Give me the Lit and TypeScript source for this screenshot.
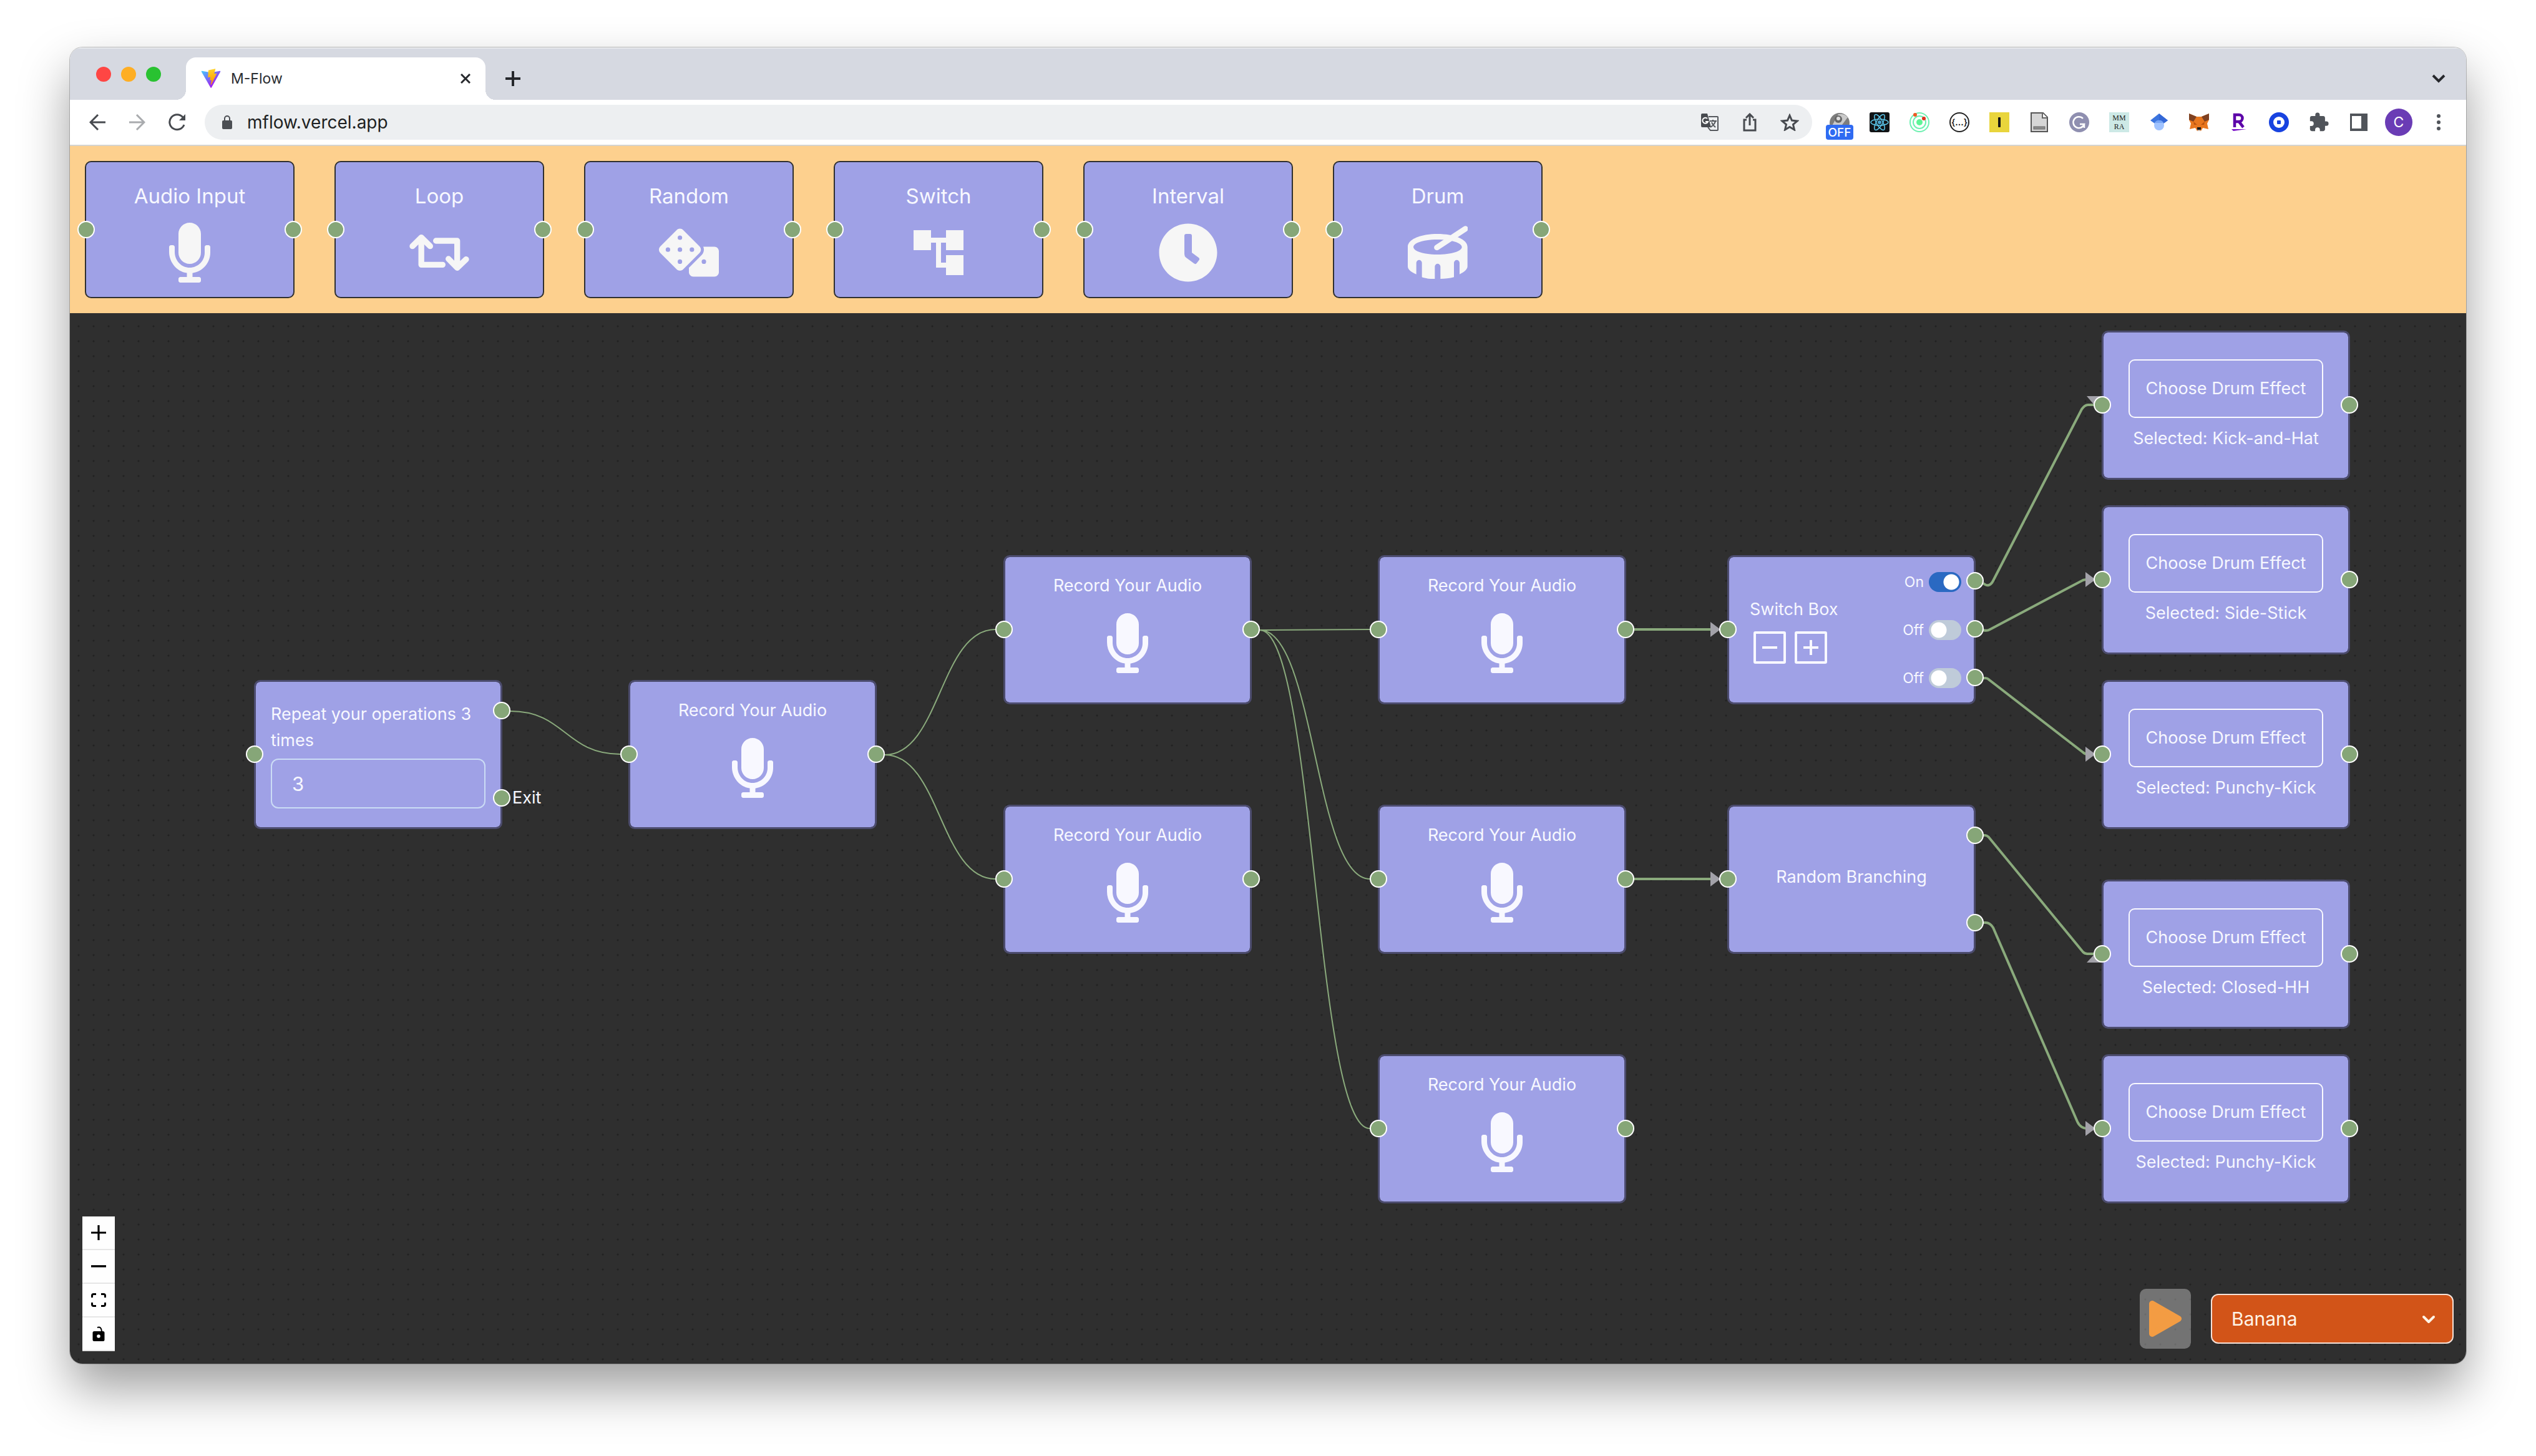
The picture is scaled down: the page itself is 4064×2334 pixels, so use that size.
import { LitElement, html, svg, css, type TemplateResult } from "lit";
import { customElement, state } from "lit/decorators.js";

/* ---------- shared glyphs ---------- */

const micIcon = html`<svg class="glyph" viewBox="-80 0 512 512" aria-hidden="true">
  <path d="M176 352c53.02 0 96-42.98 96-96V96c0-53.02-42.98-96-96-96S80 42.98 80 96v160c0 53.02 42.98 96 96 96zm160-160h-16c-8.84 0-16 7.16-16 16v48c0 74.8-64.49 134.82-140.79 127.38C96.71 376.89 48 317.11 48 250.3V208c0-8.84-7.16-16-16-16H16c-8.84 0-16 7.16-16 16v40.16c0 89.64 63.97 169.55 152 181.69V464H96c-8.84 0-16 7.16-16 16v16c0 8.84 7.16 16 16 16h160c8.84 0 16-7.16 16-16v-16c0-8.84-7.16-16-16-16h-56v-33.77C285.71 418.47 352 344.9 352 256v-48c0-8.84-7.16-16-16-16z"/>
</svg>`;

const loopIcon = html`<svg class="glyph line" viewBox="33 21 288 288" stroke-width="28" aria-hidden="true">
  <path d="M48 134L90.500 92L133 134M90.500 96V223H193M161 108H263V236M221 195L263 238L306 197"/>
</svg>`;

const diceIcon = html`<svg class="glyph" viewBox="0 0 640 512" aria-hidden="true">
  <path fill-rule="evenodd" d="M592 192H473.260c12.690 29.590 7.120 65.200-17 89.320L320 417.580V464c0 26.510 21.490 48 48 48h224c26.510 0 48-21.490 48-48V240c0-26.510-21.490-48-48-48zM480 376a24 24 0 1 1 0-48 24 24 0 0 1 0 48zM433.630 189.300L258.700 14.370c-19.160-19.160-50.230-19.160-69.390 0L14.370 189.300c-19.160 19.160-19.160 50.230 0 69.390L189.300 433.630c19.160 19.160 50.230 19.160 69.390 0L433.630 258.700c19.160-19.170 19.160-50.240 0-69.400zM96 248a24 24 0 1 1 0-48 24 24 0 0 1 0 48zM224 376a24 24 0 1 1 0-48 24 24 0 0 1 0 48zM224 248a24 24 0 1 1 0-48 24 24 0 0 1 0 48zM224 120a24 24 0 1 1 0-48 24 24 0 0 1 0 48zM352 248a24 24 0 1 1 0-48 24 24 0 0 1 0 48z"/>
</svg>`;

const treeIcon = html`<svg class="glyph" viewBox="0 0 24 24" aria-hidden="true">
  <path d="M22 11V3h-7v3H9V3H2v8h7V8h2v10h4v3h7v-8h-7v3h-2V8h2v3z"/>
</svg>`;

const clockIcon = html`<svg class="glyph" viewBox="0 0 512 512" aria-hidden="true">
  <path d="M256,8C119,8,8,119,8,256S119,504,256,504,504,393,504,256,393,8,256,8Zm92.49,313h0l-20,25a16,16,0,0,1-22.49,2.5h0l-67-49.72a40,40,0,0,1-15-31.23V112a16,16,0,0,1,16-16h32a16,16,0,0,1,16,16V256l58,42.5A16,16,0,0,1,348.49,321Z"/>
</svg>`;

const drumIcon = html`<svg class="glyph" viewBox="48 21 288 288" aria-hidden="true">
  <path fill-rule="evenodd" d="M48 137C48 100 112 75 191 75S335 100 335 137V232C335 245 318 260 297 269V214a13.500 13.500 0 0 0-27 0V283C250 289 225 291 205 291V232a13.500 13.500 0 0 0-27 0V291C155 291 132 289 116 283V214a13.500 13.500 0 0 0-27 0V269C62 258 48 245 48 232ZM191 102C125 102 75 118 75 138S125 174 191 174S308 158 308 138S257 102 191 102Z"/>
  <path d="M188 140L325 50" class="stick" stroke-width="27"/>
</svg>`;

/* ---------- browser frame ---------- */

interface Extension {
  label: string;
  art: TemplateResult;
}

const extensions: Extension[] = [
  { label: "Helper (off)", art: html`<svg width="44" height="56" viewBox="0 0 44 56">
      <circle cx="22" cy="29" r="16" fill="#7d7d7d"/><path d="M8 37L20 15a16 16 0 0 1 15 5L17 44Z" fill="#c9c9c9"/><circle cx="20" cy="23" r="6" fill="#666"/><circle cx="20" cy="22" r="3" fill="#ddd"/>
      <rect y="32" width="44" height="24" rx="4" fill="#2f6bf2"/><text x="22" y="51" text-anchor="middle" font-size="19" font-weight="500" fill="#fff">OFF</text></svg>` },
  { label: "React tools", art: html`<svg width="32" height="32" viewBox="0 0 32 32"><rect width="32" height="32" rx="3" fill="#111416"/>
      <g fill="none" stroke="#5cc8ec" stroke-width="1.500"><ellipse cx="16" cy="16" rx="14" ry="5"/><ellipse cx="16" cy="16" rx="14" ry="5" transform="rotate(60 16 16)"/><ellipse cx="16" cy="16" rx="14" ry="5" transform="rotate(120 16 16)"/></g><circle cx="16" cy="16" r="3" fill="#4aa3cc"/></svg>` },
  { label: "Orbit", art: html`<svg width="32" height="32" viewBox="0 0 32 32"><g fill="none" stroke="#6df0b0" stroke-width="2"><circle cx="16" cy="16" r="15"/><circle cx="16" cy="16" r="10"/></g>
      <circle cx="16" cy="16" r="5" fill="#5ff598"/><circle cx="9" cy="4" r="3" fill="#ee5a24"/><circle cx="23" cy="10" r="3" fill="#e0311d"/></svg>` },
  { label: "JSON view", art: html`<svg width="32" height="32" viewBox="0 0 32 32"><circle cx="16" cy="16" r="15" fill="#fff" stroke="#222" stroke-width="2"/>
      <text x="16" y="21" text-anchor="middle" font-size="14" font-weight="600" fill="#222">{...}</text></svg>` },
  { label: "Instant", art: html`<svg width="32" height="32" viewBox="0 0 32 32"><rect width="32" height="32" fill="#e9d53c"/><rect x="14" y="8" width="4" height="16" rx="1" fill="#151515"/></svg>` },
  { label: "Page", art: html`<svg width="28" height="32" viewBox="0 0 28 32"><path d="M1 1H20L27 8V31H1Z" fill="#d6d6d6" stroke="#555" stroke-width="2"/><path d="M19 1V9H27" fill="#fff" stroke="#666" stroke-width="2"/><rect x="5" y="23" width="18" height="4" fill="#8d8d8d" stroke="#666"/></svg>` },
  { label: "Grammar", art: html`<svg width="32" height="32" viewBox="0 0 32 32"><circle cx="16" cy="16" r="16" fill="#8f8fb0"/><path d="M22 10A9 9 0 1 0 24 19H17M24 18V25" fill="none" stroke="#fff" stroke-width="2.500"/></svg>` },
  { label: "MMRA", art: html`<svg width="32" height="32" viewBox="0 0 32 32"><rect width="32" height="32" fill="#cde9e6"/><g font-size="12" text-anchor="middle" fill="#222"><text class="serif" x="16" y="13">MM</text><text class="serif" x="16" y="27">RA</text></g></svg>` },
  { label: "Scholar", art: html`<svg width="28" height="28" viewBox="0 0 28 28"><path d="M14 0L28 11L21 16H7L0 11Z" fill="#3b74de"/><path d="M14 0L28 11L21 16L14 11Z" fill="#3367d6"/><ellipse cx="14" cy="19" rx="8" ry="8" fill="#a0c3ff"/><path d="M7 15a8 8 0 0 1 14 0Z" fill="#77a5f5"/></svg>` },
  { label: "Wallet", art: html`<svg width="32" height="32" viewBox="0 0 32 32"><path d="M0 2L12 7H20L32 2V12L29 18L31 27L22 25L19 30H13L10 25L1 27L3 18L0 12Z" fill="#e8771f"/><path d="M0 2L12 7L7 15L0 12ZM32 2L20 7L25 15L32 12Z" fill="#7e4122"/><path d="M7 15L13 20L8 20ZM25 15L19 20H24Z" fill="#b9530f"/><path d="M13 24H19V28H13Z" fill="#1c1c1c"/><path d="M13 28H19L18 30H14Z" fill="#cbb8aa"/></svg>` },
  { label: "Rewards", art: html`<svg width="24" height="30" viewBox="0 0 24 30"><path d="M5 23V3H12A5 5 0 0 1 12 14H5M12 14L19 23" fill="none" stroke="#5c00a8" stroke-width="4.500"/><path d="M0 26H24L3 29Z" fill="#7a10c8"/></svg>` },
  { label: "Coin wallet", art: html`<svg width="32" height="32" viewBox="0 0 32 32"><circle cx="16" cy="16" r="16" fill="#1843e0"/><circle cx="16" cy="16" r="9" fill="#fff"/><rect x="13" y="13" width="6" height="6" rx="1" fill="#1843e0"/></svg>` },
  { label: "Extensions", art: html`<svg width="34" height="34" viewBox="0 0 24 24" fill="#50545a"><path d="M20.500 11H19V7c0-1.100-.900-2-2-2h-4V3.500a2.500 2.500 0 0 0-5 0V5H4c-1.100 0-2 .900-2 2v3.800h1.500a2.700 2.700 0 0 1 0 5.400H2V20c0 1.100.900 2 2 2h3.800v-1.500a2.700 2.700 0 0 1 5.400 0V22H17c1.100 0 2-.900 2-2v-4h1.500a2.500 2.500 0 0 0 0-5z"/></svg>` },
  { label: "Side panel", art: html`<svg width="28" height="28" viewBox="0 0 28 28"><path fill="#50545a" fill-rule="evenodd" d="M0 0H28V28H0ZM3 4V24H18V4Z"/></svg>` },
  { label: "Profile", art: html`<svg width="44" height="44" viewBox="0 0 44 44"><circle cx="22" cy="22" r="22" fill="#6a3cb5"/><text x="22" y="30" text-anchor="middle" font-size="23" fill="#fff">C</text></svg>` },
  { label: "Menu", art: html`<svg width="8" height="28" viewBox="0 0 8 28" fill="#50545a"><circle cx="4" cy="4" r="3"/><circle cx="4" cy="14" r="3"/><circle cx="4" cy="24" r="3"/></svg>` },
];

@customElement("browser-bar")
export class BrowserBar extends LitElement {
  static styles = css`
    :host { display: block; font-family: Inter, "Liberation Sans", sans-serif; }
    button { border: 0; padding: 0; margin: 0; background: none; font: inherit; color: inherit;
      display: flex; align-items: center; justify-content: center; }
    .strip { display: flex; align-items: flex-end; height: 84px; background: #d6d9e1;
      box-shadow: inset 0 2px 0 #e6e8ec; padding-right: 12px; }
    .lights { display: flex; gap: 16px; width: 186px; box-sizing: border-box; padding: 2px 0 0 42px; align-self: center; }
    .light { width: 24px; height: 24px; border-radius: 50%; }
    .close { background: #fe4644; }
    .mini { background: #feae24; }
    .full { background: #29c231; }
    .tab { position: relative; display: flex; align-items: center; gap: 16px; box-sizing: border-box;
      width: 480px; height: 68px; padding: 0 16px 0 24px; background: #fff; border-radius: 16px 16px 0 0; }
    .tab::before, .tab::after { content: ""; position: absolute; bottom: 0; width: 16px; height: 16px; }
    .tab::before { right: 100%; background: radial-gradient(circle at 0 0, transparent 16px, #fff 16px); }
    .tab::after { left: 100%; background: radial-gradient(circle at 100% 0, transparent 16px, #fff 16px); }
    .tab-title { flex: 1; font-size: 23px; line-height: 32px; color: #2a2d31; }
    .tab button { width: 32px; height: 32px; }
    .strip > button { width: 64px; height: 68px; }
    .new { margin-left: 12px; }
    .grow { flex: 1; }
    .tools { display: flex; align-items: center; height: 72px; padding: 0 12px; background: #fff;
      border-bottom: 2px solid #d4d4d2; }
    .tools button { width: 64px; height: 56px; flex: none; }
    .address { flex: 1; display: flex; align-items: center; margin: 0 12px; height: 56px;
      padding: 0 4px 0 28px; border-radius: 28px; background: #edeff1; }
    .address input { flex: 1; min-width: 0; border: 0; margin: 0 0 0 24px; padding: 0; outline: 0; background: none;
      font: 28px/40px Inter, "Liberation Sans", sans-serif; color: #1d1f22; }
    .ink { fill: none; stroke: #474a4f; stroke-width: 3; }
    .dim { stroke: #a9abae; }
    .dark { stroke: #26282c; }
    svg text { font-family: Inter, "Liberation Sans", sans-serif; }
    svg .serif { font-family: "Liberation Serif", serif; }
  `;

  render() {
    return html`
      <div class="strip">
        <div class="lights">
          <span class="light close"></span><span class="light mini"></span><span class="light full"></span>
        </div>
        <div class="tab">
          <svg width="32" height="32" viewBox="0 0 410 404" aria-hidden="true">
            <defs>
              <linearGradient id="shield" x1="6" y1="33" x2="235" y2="344" gradientUnits="userSpaceOnUse"><stop stop-color="#41d1ff"/><stop offset="1" stop-color="#a020f0"/></linearGradient>
              <linearGradient id="bolt" x1="194" y1="9" x2="236" y2="293" gradientUnits="userSpaceOnUse"><stop stop-color="#ffd32a"/><stop offset="1" stop-color="#ff9a00"/></linearGradient>
            </defs>
            <path fill="url(#shield)" d="M399.641 59.525L215.643 388.545C211.844 395.338 202.084 395.378 198.228 388.618L10.582 59.556C6.381 52.190 12.680 43.267 21.028 44.759L205.223 77.682C206.398 77.892 207.601 77.890 208.776 77.676L389.119 44.806C397.439 43.289 403.768 52.143 399.641 59.525Z"/>
            <path fill="url(#bolt)" d="M292.965 1.574L156.801 28.255C154.563 28.694 152.906 30.590 152.771 32.866L144.395 174.330C144.198 177.662 147.258 180.248 150.510 179.498L188.420 170.749C191.967 169.931 195.172 173.055 194.443 176.622L183.180 231.775C182.422 235.487 185.907 238.661 189.532 237.560L212.947 230.446C216.577 229.344 220.065 232.527 219.297 236.242L201.398 322.875C200.278 328.294 207.486 331.249 210.492 326.603L212.500 323.500L323.454 102.072C325.312 98.365 322.108 94.137 318.036 94.923L279.014 102.454C275.347 103.161 272.227 99.746 273.262 96.158L298.731 7.867C299.767 4.273 296.636 0.855 292.965 1.574Z"/>
          </svg>
          <span class="tab-title">M-Flow</span>
          <button aria-label="Close tab"><svg class="ink dark" width="16" height="16" viewBox="0 0 16 16"><path d="M1 1L15 15M15 1L1 15"/></svg></button>
        </div>
        <button class="new" aria-label="New tab"><svg class="ink dark" width="24" height="24" viewBox="0 0 24 24"><path d="M12 0V24M0 12H24" stroke-width="4"/></svg></button>
        <span class="grow"></span>
        <button aria-label="Search tabs"><svg class="ink dark" width="24" height="16" viewBox="0 0 24 16"><path d="M3 3L12 12L21 3" stroke-width="4"/></svg></button>
      </div>
      <div class="tools">
        <button aria-label="Back"><svg class="ink" width="26" height="26" viewBox="0 0 26 26"><path d="M26 13H2M14 1L2 13L14 25"/></svg></button>
        <button aria-label="Forward"><svg class="ink dim" width="26" height="26" viewBox="0 0 26 26"><path d="M0 13H24M12 1L24 13L12 25"/></svg></button>
        <button aria-label="Reload"><svg class="ink" width="28" height="28" viewBox="0 0 28 28"><path d="M23 6A12 12 0 1 0 25 18" stroke-width="3"/><path d="M27 1V11H17Z" fill="#474a4f" stroke="none"/></svg></button>
        <div class="address">
          <svg width="16" height="22" viewBox="0 0 16 22" aria-hidden="true"><rect y="8" width="16" height="14" rx="2" fill="#4b4e53"/><path d="M4 9V5a4 4 0 0 1 8 0V9" fill="none" stroke="#4b4e53" stroke-width="2"/></svg>
          <input aria-label="Address" value="mflow.vercel.app" />
          <button aria-label="Translate"><svg width="28" height="28" viewBox="0 0 28 28">
            <path d="M12 5H26a1 1 0 0 1 1 1V26a1 1 0 0 1-1 1H15L11 22" fill="none" stroke="#55585d" stroke-width="2"/>
            <path d="M2 0H10L16 22H2A2 2 0 0 1 0 20V2A2 2 0 0 1 2 0Z" fill="#474a4f"/>
            <path d="M10 8A4.500 4.500 0 1 0 11 13H7" fill="none" stroke="#fff" stroke-width="2"/>
            <path d="M14 12H25M19 10V12M23 12C22 17 18 20 15 22M17 14C18 18 21 20 23 22" fill="none" stroke="#55585d" stroke-width="2"/></svg></button>
          <button aria-label="Share"><svg class="ink" width="22" height="30" viewBox="0 0 22 30"><path d="M6 11H2V28H20V11H16M11 20V3M5 8L11 2L17 8"/></svg></button>
          <button aria-label="Bookmark"><svg class="ink" width="30" height="28" viewBox="0 0 30 28"><path d="M15 3L18.500 11L27 12L20.500 17.500L22.500 26L15 21.500L7.500 26L9.500 17.500L3 12L11.500 11Z"/></svg></button>
        </div>
        ${extensions.map((e) => html`<button aria-label=${e.label}>${e.art}</button>`)}
      </div>
    `;
  }
}

/* ---------- flow diagram ---------- */

const NODE_W = 398;

type Kind = "loop" | "record" | "switch" | "random" | "drum";

interface FlowNode {
  id: string;
  kind: Kind;
  x: number;
  y: number;
  effect?: string;
}

const nodes: FlowNode[] = [
  { id: "loop", kind: "loop", x: 295, y: 588 },
  { id: "rec-1", kind: "record", x: 895, y: 588 },
  { id: "rec-2", kind: "record", x: 1496, y: 388 },
  { id: "rec-3", kind: "record", x: 1496, y: 788 },
  { id: "rec-4", kind: "record", x: 2096, y: 388 },
  { id: "rec-5", kind: "record", x: 2096, y: 788 },
  { id: "rec-6", kind: "record", x: 2096, y: 1188 },
  { id: "switch", kind: "switch", x: 2656, y: 388 },
  { id: "random", kind: "random", x: 2656, y: 788 },
  { id: "drum-1", kind: "drum", x: 3256, y: 28, effect: "Kick-and-Hat" },
  { id: "drum-2", kind: "drum", x: 3256, y: 308, effect: "Side-Stick" },
  { id: "drum-3", kind: "drum", x: 3256, y: 588, effect: "Punchy-Kick" },
  { id: "drum-4", kind: "drum", x: 3256, y: 908, effect: "Closed-HH" },
  { id: "drum-5", kind: "drum", x: 3256, y: 1188, effect: "Punchy-Kick" },
];

/** Heights of the outgoing handles, measured from the top of the node. */
const outlets: Record<Kind, number[]> = {
  loop: [50, 190],
  record: [120],
  switch: [42, 119, 197],
  random: [50, 190],
  drum: [120],
};

const curves: [string, number, string][] = [
  ["loop", 0, "rec-1"],
  ["rec-1", 0, "rec-2"],
  ["rec-1", 0, "rec-3"],
  ["rec-2", 0, "rec-4"],
  ["rec-2", 0, "rec-5"],
  ["rec-2", 0, "rec-6"],
];

const steps: { d: string; head: string }[] = [
  { d: "M2506 507H2634", head: "2629,495 2645,507 2629,519" },
  { d: "M2506 907H2634", head: "2629,895 2645,907 2629,919" },
  { d: "M3066 433Q3076 441 3082 429L3224 154Q3229 147 3234 147H3246", head: "3232,133 3256,133 3244,147" },
  { d: "M3066 508Q3072 510 3077 507L3226 428Q3229 427 3234 427", head: "3230,415 3246,427 3230,439" },
  { d: "M3066 585H3070Q3073 585 3076 588L3226 704Q3229 707 3234 707", head: "3230,695 3246,707 3230,719" },
  { d: "M3066 837H3069Q3072 837 3075 840L3226 1024Q3229 1027 3233 1027H3246", head: "3232,1041 3245,1027 3256,1041" },
  { d: "M3066 977H3070Q3077 977 3082 985L3217 1296Q3222 1307 3234 1307", head: "3230,1295 3246,1307 3230,1319" },
];

const palette: { name: string; icon: TemplateResult }[] = [
  { name: "Audio Input", icon: micIcon },
  { name: "Loop", icon: loopIcon },
  { name: "Random", icon: diceIcon },
  { name: "Switch", icon: treeIcon },
  { name: "Interval", icon: clockIcon },
  { name: "Drum", icon: drumIcon },
];

@customElement("app-root")
export class AppRoot extends LitElement {
  @state() private repeats = "3";
  @state() private switches = [true, false, false];

  static styles = css`
    :host { display: flex; box-sizing: border-box; min-height: 100vh; padding: 76px 112px 148px;
      background: #fff; font-family: Inter, "Liberation Sans", sans-serif; color: #f7f8ff; }
    button, input, select { font: inherit; color: inherit; margin: 0; }
    .window { flex: 1; min-width: 0; display: flex; flex-direction: column; border-radius: 20px; overflow: hidden;
      box-shadow: 0 0 0 1px rgba(0, 0, 0, 0.22), 0 40px 80px rgba(0, 0, 0, 0.38); }
    .palette { display: flex; gap: 64px; padding: 24px; background: #fdd08e; }
    .card { position: relative; box-sizing: border-box; width: 336px; height: 220px; padding-top: 29px;
      display: flex; flex-direction: column; align-items: center; gap: 18px;
      background: #9fa1e6; border: 2px solid #2f2f2f; border-radius: 10px; }
    .card-name { font-size: 33px; line-height: 50px; }
    .glyph { display: block; width: 96px; height: 96px; fill: #f6f6f6; }
    .line { fill: none; stroke: #f6f6f6; stroke-linecap: round; stroke-linejoin: round; }
    .stick { stroke: #f6f6f6; stroke-linecap: round; }
    .handle { position: absolute; box-sizing: border-box; width: 28px; height: 28px; border-radius: 50%;
      background: #86a678; border: 2px solid #fff; }
    .card .handle { top: 94px; }
    .card .in { left: -14px; }
    .card .out { right: -14px; }

    .canvas { position: relative; flex: 1; overflow: hidden; background-color: #2f2f2f;
      background-image: radial-gradient(circle, #222 1px, transparent 2px);
      background-size: 24px 24px; background-position: 2px 9px; }
    .edges { position: absolute; inset: 0; width: 100%; height: 100%; fill: none; stroke: #8aaa7c; }
    .heads { fill: #a3a2a9; stroke: none; }
    .node { position: absolute; box-sizing: border-box; width: 398px; height: 239px; border-radius: 10px;
      background: #9fa1e6; background-clip: padding-box; border: 3px solid #4c4c6e;
      font-size: 27px; line-height: 42px; }
    .node .in { left: -16px; top: 102px; }
    .node .out { right: -16px; }
    .exit { position: absolute; left: 411px; top: 165px; }
    .record { display: flex; flex-direction: column; align-items: center; gap: 23px; padding-top: 25px; }
    .record .glyph { fill: #f8f8ff; }
    .loop { padding: 31px 24px 0; }
    .loop label { display: block; }
    .loop input { display: block; box-sizing: border-box; width: 100%; height: 80px; margin-top: 8px; padding: 0 32px;
      background: none; border: 2px solid #cbdcf5; border-radius: 12px; font-size: 31px; outline: 0; }
    .random { display: flex; align-items: center; justify-content: center; padding-bottom: 8px; }
    .drum { display: flex; flex-direction: column; align-items: center; gap: 12px; padding-top: 43px; }
    .drum button { width: 312px; height: 94px; padding: 0; background: none; border: 2px solid #fafaff; border-radius: 10px; }
    .switch { display: flex; align-items: center; justify-content: space-between; padding: 0 20px 0 33px; }
    .box-side { display: flex; flex-direction: column; gap: 14px; }
    .box-buttons { display: flex; gap: 14px; padding-left: 6px; }
    .box-buttons button { display: block; width: 52px; height: 52px; padding: 0; background: none; border: 0; }
    .box-buttons svg { display: block; fill: none; stroke: #f8f8ff; }
    .toggles { display: flex; flex-direction: column; gap: 45px; }
    .toggle { display: flex; align-items: center; justify-content: flex-end; gap: 8px; font-size: 23px; line-height: 32px; }
    .toggle input { appearance: none; display: block; width: 52px; height: 32px; border-radius: 16px;
      background: radial-gradient(circle at 16px 50%, #fff 12px, #bfcbd9 13px); }
    .toggle input:checked { background: radial-gradient(circle at 36px 50%, #fff 12px, #2a69c2 13px); }

    .controls { position: absolute; left: 20px; bottom: 20px; display: flex; flex-direction: column; }
    .controls button { box-sizing: border-box; width: 52px; height: 54px; padding: 0; display: flex; align-items: center;
      justify-content: center; background: #fefefe; border: 0; border-bottom: 2px solid #e6e6e6; }
    .player { position: absolute; right: 20px; bottom: 24px; display: flex; align-items: center; gap: 32px; }
    .play { width: 82px; height: 96px; padding: 0; border: 0; border-radius: 10px; background: rgba(255, 255, 255, 0.33);
      display: flex; align-items: center; justify-content: center; }
    .picker { position: relative; display: block; }
    .picker select { appearance: none; display: block; box-sizing: border-box; width: 389px; height: 80px; padding: 0 31px;
      border: 2px solid #f6e2d8; border-radius: 12px; background: #d25418; color: #fff4e6; font-size: 30px; outline: 0; }
    .picker svg { position: absolute; right: 28px; top: 33px; pointer-events: none; }
  `;

  private find(id: string): FlowNode {
    return nodes.find((n) => n.id === id)!;
  }

  private curve(from: string, outlet: number, to: string) {
    const a = this.find(from);
    const b = this.find(to);
    const x1 = a.x + NODE_W + 13;
    const y1 = a.y + outlets[a.kind][outlet];
    const x2 = b.x - 13;
    const y2 = b.y + 119;
    const mid = (x1 + x2) / 2;
    return svg`<path d="M${x1} ${y1}C${mid} ${y1} ${mid} ${y2} ${x2} ${y2}"/>`;
  }

  private flip(i: number) {
    this.switches = this.switches.map((on, k) => (k === i ? !on : on));
  }

  private body(n: FlowNode) {
    switch (n.kind) {
      case "loop":
        return html`<label for="repeats">Repeat your operations ${this.repeats} times</label>
          <input id="repeats" type="text" .value=${this.repeats}
            @input=${(e: Event) => (this.repeats = (e.target as HTMLInputElement).value)} />
          <span class="exit">Exit</span>`;
      case "record":
        return html`<span>Record Your Audio</span>${micIcon}`;
      case "random":
        return html`<span>Random Branching</span>`;
      case "drum":
        return html`<button>Choose Drum Effect</button><span>Selected: ${n.effect}</span>`;
      case "switch":
        return html`<div class="box-side">
            <span>Switch Box</span>
            <div class="box-buttons">
              <button aria-label="Remove output"><svg width="52" height="52" viewBox="0 0 52 52"><rect x="2" y="2" width="48" height="48" rx="1" stroke-width="4"/><path d="M14 26H38" stroke-width="4"/></svg></button>
              <button aria-label="Add output"><svg width="52" height="52" viewBox="0 0 52 52"><rect x="2" y="2" width="48" height="48" rx="1" stroke-width="4"/><path d="M14 26H38M26 14V38" stroke-width="4"/></svg></button>
            </div>
          </div>
          <div class="toggles">
            ${this.switches.map((on, i) => html`<label class="toggle">${on ? "On" : "Off"}
              <input type="checkbox" role="switch" .checked=${on} @change=${() => this.flip(i)} /></label>`)}
          </div>`;
    }
  }

  render() {
    return html`
      <main class="window">
        <browser-bar></browser-bar>
        <section class="palette" aria-label="Blocks">
          ${palette.map((p) => html`<div class="card" draggable="true">
            <span class="card-name">${p.name}</span>${p.icon}
            <span class="handle in"></span><span class="handle out"></span>
          </div>`)}
        </section>
        <section class="canvas" aria-label="Flow">
          <svg class="edges" aria-hidden="true">
            <g stroke-width="2">${curves.map(([a, i, b]) => this.curve(a, i, b))}</g>
            <g stroke-width="4">${steps.map((s) => svg`<path d=${s.d}/>`)}</g>
            <g class="heads">${steps.map((s) => svg`<polygon points=${s.head}/>`)}</g>
          </svg>
          ${nodes.map((n) => html`<article class="node ${n.kind}" style="left:${n.x}px;top:${n.y}px">
            ${this.body(n)}
            <span class="handle in"></span>
            ${outlets[n.kind].map((y) => html`<span class="handle out" style="top:${y - 18}px"></span>`)}
          </article>`)}
          <div class="controls">
            <button aria-label="Zoom in"><svg width="24" height="24" viewBox="0 0 32 32"><path d="M32 18.133H18.133V32h-4.266V18.133H0v-4.266h13.867V0h4.266v13.867H32z"/></svg></button>
            <button aria-label="Zoom out"><svg width="24" height="4" viewBox="0 0 32 5"><path d="M0 0h32v4.500H0z"/></svg></button>
            <button aria-label="Fit view"><svg width="24" height="22" viewBox="0 0 24 22" fill="none" stroke="#000" stroke-width="3"><path d="M8 1.500H4Q1.500 1.500 1.500 4V7M16 1.500H20Q22.500 1.500 22.500 4V7M22.500 15V18Q22.500 20.500 20 20.500H16M8 20.500H4Q1.500 20.500 1.500 18V15"/></svg></button>
            <button aria-label="Lock"><svg width="20" height="24" viewBox="0 0 20 24"><path fill-rule="evenodd" d="M3 8H17A2.500 2.500 0 0 1 19.500 10.500V21.500A2.500 2.500 0 0 1 17 24H3A2.500 2.500 0 0 1 .500 21.500V10.500A2.500 2.500 0 0 1 3 8ZM10 13.200A2.800 2.800 0 1 0 10 18.800A2.800 2.800 0 1 0 10 13.200Z"/><path d="M8 2Q14 -.500 15 8" fill="none" stroke="#000" stroke-width="2"/></svg></button>
          </div>
          <div class="player">
            <button class="play" aria-label="Play"><svg width="52" height="58" viewBox="0 0 52 58"><path d="M5 5V53L47 29Z" fill="#f39c43" stroke="#f39c43" stroke-width="10" stroke-linejoin="round"/></svg></button>
            <label class="picker">
              <select aria-label="Instrument"><option selected>Banana</option></select>
              <svg width="24" height="16" viewBox="0 0 24 16" fill="none" stroke="#fff4e6" stroke-width="4" stroke-linecap="round" stroke-linejoin="round"><path d="M4 4L12 12L20 4"/></svg>
            </label>
          </div>
        </section>
      </main>
    `;
  }
}
